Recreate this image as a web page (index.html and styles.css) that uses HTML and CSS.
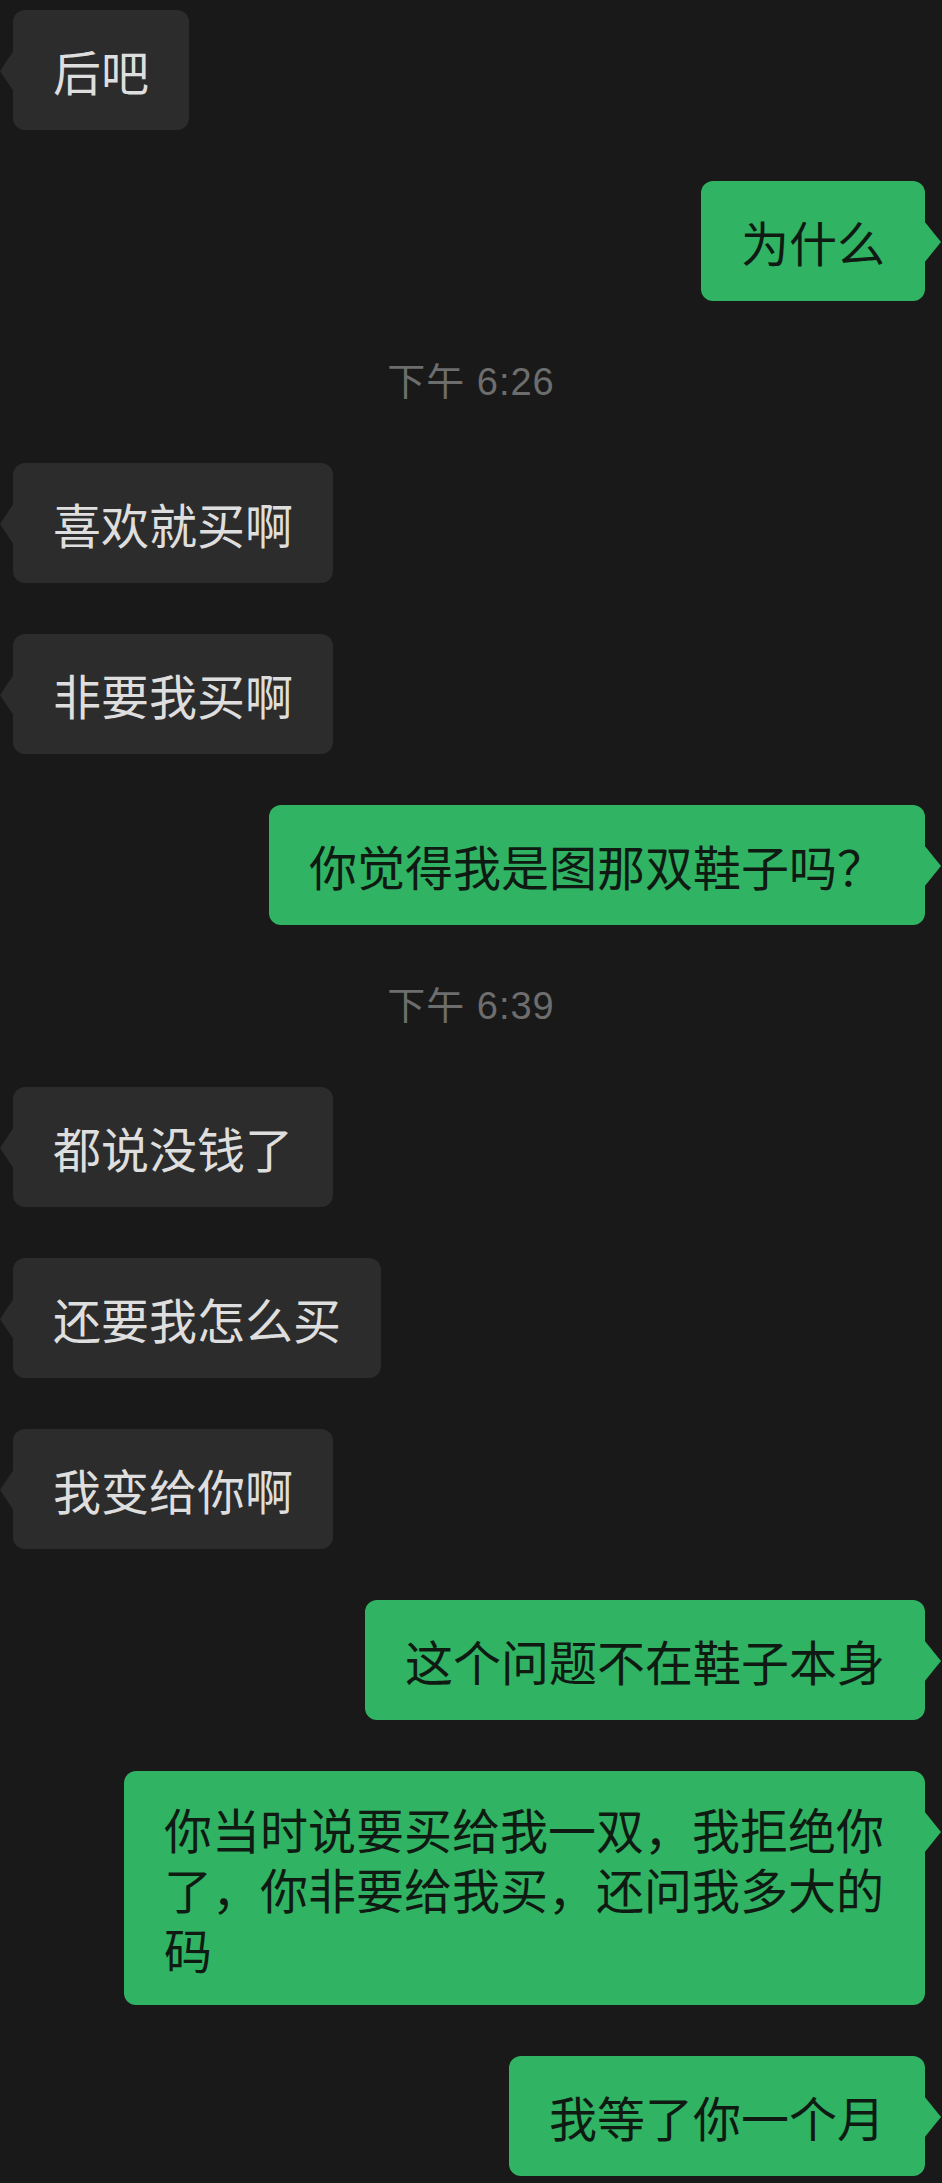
FILE: index.html
```html
<!DOCTYPE html>
<html lang="zh-CN">
<head>
  <meta charset="UTF-8" />
  <meta name="viewport" content="width=device-width, initial-scale=1.0"/>
  <title>聊天记录</title>
  <link rel="stylesheet" href="styles.css">
</head>
<body>
  <div class="chat">
    <div class="msg left"><div class="bubble">后吧</div></div>
    <div class="msg right"><div class="bubble">为什么</div></div>

    <div class="time">下午 6:26</div>

    <div class="msg left"><div class="bubble">喜欢就买啊</div></div>
    <div class="msg left"><div class="bubble">非要我买啊</div></div>
    <div class="msg right"><div class="bubble">你觉得我是图那双鞋子吗？</div></div>

    <div class="time">下午 6:39</div>

    <div class="msg left"><div class="bubble">都说没钱了</div></div>
    <div class="msg left"><div class="bubble">还要我怎么买</div></div>
    <div class="msg left"><div class="bubble">我变给你啊</div></div>
    <div class="msg right"><div class="bubble">这个问题不在鞋子本身</div></div>
    <div class="msg right"><div class="bubble long">你当时说要买给我一双，我拒绝你了，你非要给我买，还问我多大的码</div></div>
    <div class="msg right"><div class="bubble">我等了你一个月</div></div>
  </div>
</body>
</html>
```

FILE: styles.css
```css
body {
  margin: 0;
  padding: 0;
  background-color: #191919;
  font-family: "Noto Sans CJK SC", "Noto Sans", sans-serif;
  min-height: 100vh;
}

.chat {
  display: flex;
  flex-direction: column;
  gap: 51px;
  padding-top: 10px;
}

.msg {
  display: flex;
}

.msg.left {
  justify-content: flex-start;
  padding-left: 13px;
}

.msg.right {
  justify-content: flex-end;
  padding-right: 17px;
}

.bubble {
  position: relative;
  box-sizing: border-box;
  max-width: 801px;
  padding: 30px 40px;
  border-radius: 12px;
  font-size: 48px;
  line-height: 60px;
}

.bubble.long {
  padding-top: 27px;
  padding-bottom: 27px;
}

/* little arrow next to the bubble */
.bubble::before {
  content: "";
  position: absolute;
  top: 40px;
  width: 0;
  height: 0;
  border-top: 21px solid transparent;
  border-bottom: 21px solid transparent;
}

.left .bubble {
  background-color: #2c2c2c;
  color: #dedede;
}

.left .bubble::before {
  left: -13px;
  border-right: 14px solid #2c2c2c;
}

.right .bubble {
  background-color: #30b363;
  color: #0f1a12;
}

.right .bubble::before {
  right: -16px;
  border-left: 17px solid #30b363;
}

.time {
  height: 60px;
  line-height: 60px;
  text-align: center;
  font-family: "Liberation Sans", "Noto Sans CJK SC", sans-serif;
  font-size: 38px;
  letter-spacing: 1px;
  color: #6d6d6d;
}
```
